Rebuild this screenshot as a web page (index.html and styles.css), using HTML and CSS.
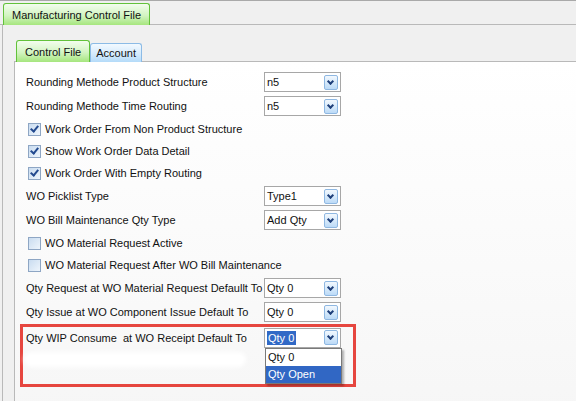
FILE: index.html
```html
<!DOCTYPE html>
<html>
  <head>
    <title>Manufacturing Control File</title>
    <link rel="stylesheet" href="styles.css">
  </head>
  <body>
    <div class="window">
      <div class="tabstrip outer">
        <div class="tab green">Manufacturing Control File</div>
      </div>
      <div class="panel">
        <div class="tabstrip inner">
          <div class="tab green">Control File</div>
          <div class="tab blue">Account</div>
        </div>
        <div class="content">
          <div class="row">
            <label>Rounding Methode Product Structure</label>
            <div class="combo"><span class="value">n5</span><span class="drop"></span></div>
          </div>
          <div class="row">
            <label>Rounding Methode Time Routing</label>
            <div class="combo"><span class="value">n5</span><span class="drop"></span></div>
          </div>
          <div class="check-row"><span class="box checked"></span>Work Order From Non Product Structure</div>
          <div class="check-row"><span class="box checked"></span>Show Work Order Data Detail</div>
          <div class="check-row"><span class="box checked"></span>Work Order With Empty Routing</div>
          <div class="row">
            <label>WO Picklist Type</label>
            <div class="combo"><span class="value">Type1</span><span class="drop"></span></div>
          </div>
          <div class="row">
            <label>WO Bill Maintenance Qty Type</label>
            <div class="combo"><span class="value">Add Qty</span><span class="drop"></span></div>
          </div>
          <div class="check-row"><span class="box"></span>WO Material Request Active</div>
          <div class="check-row"><span class="box"></span>WO Material Request After WO Bill Maintenance</div>
          <div class="row">
            <label>Qty Request at WO Material Request Defaullt To</label>
            <div class="combo"><span class="value">Qty 0</span><span class="drop"></span></div>
          </div>
          <div class="row">
            <label>Qty Issue at WO Component Issue Default To</label>
            <div class="combo"><span class="value">Qty 0</span><span class="drop"></span></div>
          </div>
          <div class="marked">
            <div class="row short">
              <label>Qty WIP Consume&nbsp; at WO Receipt Default To</label>
              <div class="combo open">
                <span class="value"><span class="sel">Qty 0</span></span><span class="drop"></span>
                <ul class="list">
                  <li>Qty 0</li>
                  <li class="hot">Qty Open</li>
                </ul>
              </div>
            </div>
            <div class="hidden-row"><div class="smudge"></div></div>
          </div>
        </div>
      </div>
    </div>
  </body>
</html>
```

FILE: styles.css
```css
body {
  margin: 0;
  background-color: #f0f0f0;
  font-family: "Liberation Sans", Arial, sans-serif;
  font-size: 11px;
  color: #111;
}
.window {
  height: 400px;
  border-top: 1px solid #a9a9a9;
  overflow: hidden;
}

/* tabs */
.tabstrip {
  display: flex;
  align-items: flex-end;
  border-bottom: 1px solid #b9b9b9;
}
.tabstrip.outer {
  height: 23px;
  padding-left: 3px;
}
.tabstrip.inner {
  height: 24px;
  padding-left: 2px;
}
.tab {
  box-sizing: border-box;
  margin-bottom: -1px;
  padding: 0 8px;
  border: 1px solid;
  border-bottom: none;
  border-radius: 3px 3px 0 0;
  display: flex;
  align-items: center;
  white-space: nowrap;
}
.tab.green {
  border-color: #62c23a;
  background: linear-gradient(#f3fdee, #d2f4c1 55%, #a6e67e);
  height: 22px;
}
.outer .tab.green {
  padding: 0 8px 0 8px;
}
.tab.blue {
  border-color: #8cbbe6;
  background: linear-gradient(#f2f9ff, #d6ebfc 55%, #b4dbf9);
  height: 19px;
  padding: 0 5px;
}
.panel {
  margin-left: 2px;
  border-left: 1px solid #b9b9b9;
  padding: 12px 0 0 11px;
  height: 400px;
}
.content {
  border-left: 1px solid #b9b9b9;
  background: linear-gradient(#ffffff, #f5f5f5);
  padding: 8px 0 0 11px;
  height: 400px;
}

/* form rows */
.row {
  display: flex;
  align-items: center;
  height: 24px;
}
.row label {
  width: 238px;
  flex: none;
  white-space: nowrap;
}
.check-row {
  display: flex;
  align-items: center;
  height: 22px;
  padding-left: 2px;
  white-space: nowrap;
}
.box {
  box-sizing: border-box;
  width: 13px;
  height: 13px;
  margin-right: 4px;
  border: 1px solid #8ea6c4;
  background: linear-gradient(135deg, #c9dcf0, #eef5fc);
  position: relative;
}
.box.checked::after {
  content: "";
  position: absolute;
  left: 3px;
  top: 0;
  width: 3px;
  height: 6px;
  border: solid #234a8f;
  border-width: 0 2px 2px 0;
  transform: rotate(40deg);
}

/* combo boxes */
.combo {
  box-sizing: border-box;
  position: relative;
  width: 77px;
  height: 20px;
  border: 1px solid #a7a7a7;
  background-color: #fff;
  display: flex;
  align-items: center;
  padding-left: 2px;
}
.combo .value {
  flex: 1;
}
.drop {
  box-sizing: border-box;
  width: 14px;
  height: 15px;
  margin-right: 2px;
  border: 1px solid #8fb8e2;
  border-radius: 2px;
  background: linear-gradient(#f2f8fe, #d7eafb 50%, #bcdaf7);
  position: relative;
}
.drop::after {
  content: "";
  position: absolute;
  left: 3px;
  top: 3px;
  width: 3px;
  height: 3px;
  border: solid #1f3f7a;
  border-width: 0 2px 2px 0;
  transform: rotate(45deg);
}
.sel {
  background-color: #3169c6;
  color: #fff;
  padding: 1px 2px 1px 1px;
}

.list {
  position: absolute;
  left: 0;
  top: 19px;
  width: 77px;
  margin: 0;
  padding: 0;
  list-style: none;
  box-sizing: border-box;
  border: 1px solid #7a7a7a;
  background-color: #fff;
  box-shadow: 2px 2px 2px rgba(0, 0, 0, 0.3);
}
.list li {
  height: 17px;
  line-height: 17px;
  padding-left: 2px;
}
.list li.hot {
  background-color: #3167c4;
  color: #fff;
}

/* highlighted block */
.marked {
  width: 336px;
  box-sizing: border-box;
  margin-left: -6px;
  border: 3px solid #e6463f;
  padding-left: 3px;
}
.row.short {
  height: 21px;
}
.hidden-row {
  height: 36px;
  padding-top: 4px;
  box-sizing: border-box;
}
.smudge {
  width: 222px;
  height: 15px;
  margin-left: -2px;
  border-radius: 8px;
  background-color: #fff;
  filter: blur(2px);
}
```
